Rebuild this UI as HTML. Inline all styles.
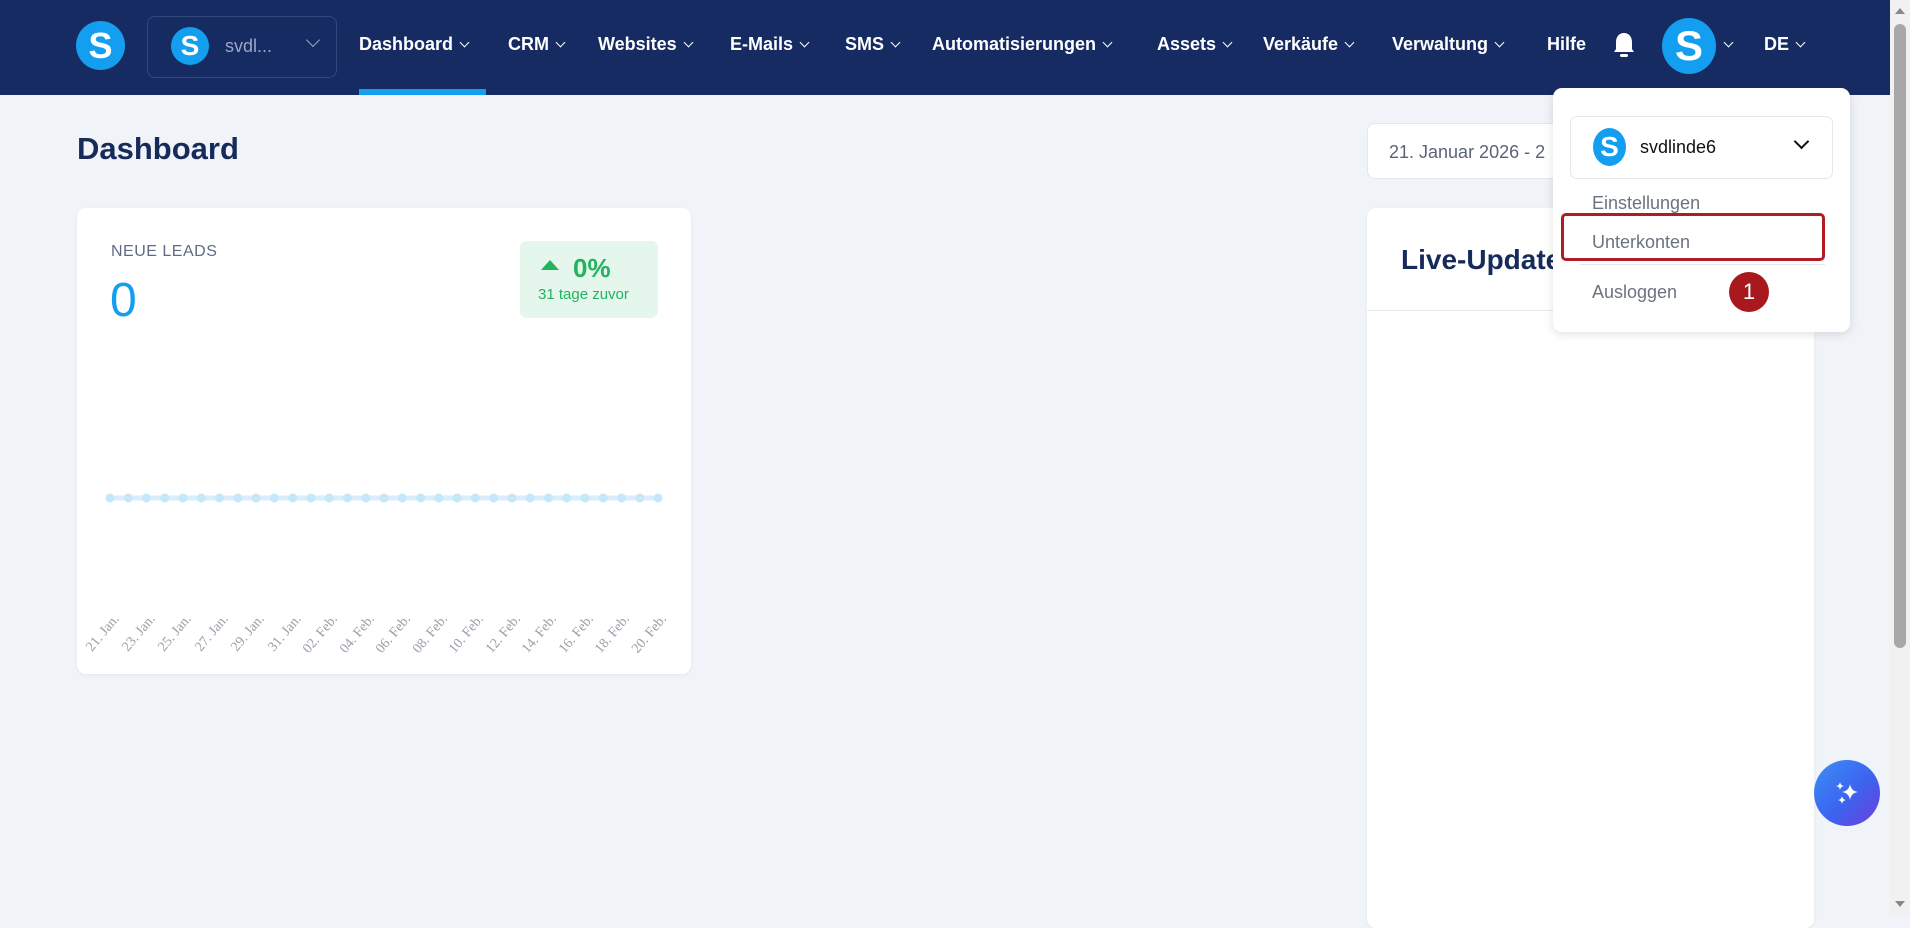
<!DOCTYPE html>
<html><head><meta charset="utf-8"><style>
*{box-sizing:border-box;margin:0;padding:0}
body{width:1910px;height:915px;overflow:hidden;background:#f0f3f8;font-family:"Liberation Sans",sans-serif;position:relative}
.nav{position:absolute;left:0;top:0;width:1890px;height:95px;background:#172b63}
.abs{position:absolute}
.circ{position:absolute;border-radius:50%;background:#139ef0;color:#fff;font-weight:bold;text-align:center;font-family:"Liberation Sans",sans-serif}
.ni{position:absolute;top:34px;color:#fff;font-weight:bold;font-size:18px;white-space:nowrap}
.chev{display:inline-block;width:7px;height:7px;border-right:1.6px solid #fff;border-bottom:1.6px solid #fff;transform:rotate(45deg);margin-left:8px;position:relative;top:-4px}
.card{position:absolute;background:#fff;border-radius:9px;box-shadow:0 1px 3px rgba(0,0,0,.06)}
.lbl{position:absolute;font-family:"Liberation Serif",serif;font-size:14px;color:#9aa0a8;transform:rotate(-50deg);transform-origin:right top;white-space:nowrap}
</style></head><body>
<div class="nav"></div>
<div class="circ" style="left:76px;top:21px;width:49px;height:49px;font-size:36px;line-height:49px">S</div>
<div class="abs" style="left:147px;top:16px;width:190px;height:62px;border:1px solid #34477a;border-radius:8px"></div>
<div class="circ" style="left:171px;top:27px;width:38px;height:38px;font-size:28px;line-height:38px">S</div>
<div class="abs" style="left:225px;top:36px;color:#9aa6c4;font-size:18px">svdl...</div>
<div class="abs" style="left:300px;top:36px"><span class="chev" style="border-color:#9aa6c4;width:10px;height:10px"></span></div>
<div class="ni" style="left:359px">Dashboard<span class="chev"></span></div>
<div class="abs" style="left:359px;top:89px;width:127px;height:6px;background:#139ef0"></div>
<div class="ni" style="left:508px">CRM<span class="chev"></span></div>
<div class="ni" style="left:598px">Websites<span class="chev"></span></div>
<div class="ni" style="left:730px">E-Mails<span class="chev"></span></div>
<div class="ni" style="left:845px">SMS<span class="chev"></span></div>
<div class="ni" style="left:932px">Automatisierungen<span class="chev"></span></div>
<div class="ni" style="left:1157px">Assets<span class="chev"></span></div>
<div class="ni" style="left:1263px">Verkäufe<span class="chev"></span></div>
<div class="ni" style="left:1392px">Verwaltung<span class="chev"></span></div>
<div class="ni" style="left:1547px">Hilfe</div>
<svg class="abs" style="left:1612px;top:31px" width="24" height="28" viewBox="0 0 24 28"><path d="M12 2c-5 0-8 4-8 9v7l-2 3h20l-2-3v-7c0-5-3-9-8-9z" fill="#fff"/><rect x="8" y="23" width="8" height="3" rx="1.5" fill="#fff"/></svg>
<div class="circ" style="left:1662px;top:18px;width:54px;height:56px;font-size:42px;line-height:56px">S</div>
<div class="ni" style="left:1725px"><span class="chev" style="margin-left:0"></span></div>
<div class="ni" style="left:1764px">DE<span class="chev"></span></div>

<div class="abs" style="left:1890px;top:0;width:20px;height:915px;background:#f1f1f1"></div>
<div class="abs" style="left:1894px;top:24px;width:12px;height:624px;background:#a8a8a8;border-radius:6px"></div>
<div class="abs" style="left:1895px;top:8px;border:5px solid transparent;border-bottom:6px solid #888;border-top:0"></div>
<div class="abs" style="left:1895px;top:901px;border:5px solid transparent;border-top:6px solid #888;border-bottom:0"></div>

<div class="abs" style="left:77px;top:131px;font-size:31px;font-weight:bold;color:#172b5a">Dashboard</div>

<div class="card" style="left:77px;top:208px;width:614px;height:466px"></div>
<div class="abs" style="left:111px;top:243px;font-size:16px;color:#5f6b85;letter-spacing:.5px">NEUE LEADS</div>
<div class="abs" style="left:110px;top:273px;font-size:48px;color:#139ef0">0</div>
<div class="abs" style="left:520px;top:241px;width:138px;height:77px;background:#e5f6ec;border-radius:7px"></div>
<div class="abs" style="left:541px;top:260px;border:9px solid transparent;border-bottom:10px solid #22b35e;border-top:0"></div>
<div class="abs" style="left:573px;top:253px;font-size:26px;font-weight:bold;color:#22b35e">0%</div>
<div class="abs" style="left:538px;top:286px;font-size:15px;color:#22b35e">31 tage zuvor</div>
<svg class="abs" style="left:100px;top:488px" width="570" height="20">
<line x1="10" y1="10" x2="558" y2="10" stroke="#d8eefc" stroke-width="5"/>
<g fill="#c6e6fc">
<circle cx="10" cy="10" r="4.5"/><circle cx="28.3" cy="10" r="4.5"/><circle cx="46.5" cy="10" r="4.5"/><circle cx="64.8" cy="10" r="4.5"/><circle cx="83" cy="10" r="4.5"/><circle cx="101.3" cy="10" r="4.5"/><circle cx="119.6" cy="10" r="4.5"/><circle cx="137.9" cy="10" r="4.5"/><circle cx="156.1" cy="10" r="4.5"/><circle cx="174.4" cy="10" r="4.5"/><circle cx="192.7" cy="10" r="4.5"/><circle cx="211" cy="10" r="4.5"/><circle cx="229.2" cy="10" r="4.5"/><circle cx="247.5" cy="10" r="4.5"/><circle cx="265.8" cy="10" r="4.5"/><circle cx="284" cy="10" r="4.5"/><circle cx="302.3" cy="10" r="4.5"/><circle cx="320.6" cy="10" r="4.5"/><circle cx="338.8" cy="10" r="4.5"/><circle cx="357.1" cy="10" r="4.5"/><circle cx="375.4" cy="10" r="4.5"/><circle cx="393.6" cy="10" r="4.5"/><circle cx="411.9" cy="10" r="4.5"/><circle cx="430.2" cy="10" r="4.5"/><circle cx="448.4" cy="10" r="4.5"/><circle cx="466.7" cy="10" r="4.5"/><circle cx="485" cy="10" r="4.5"/><circle cx="503.2" cy="10" r="4.5"/><circle cx="521.5" cy="10" r="4.5"/><circle cx="539.8" cy="10" r="4.5"/><circle cx="558" cy="10" r="4.5"/>
</g></svg>
<div class="lbl" style="left:68px;top:612px">21. Jan.</div>
<div class="lbl" style="left:104px;top:612px">23. Jan.</div>
<div class="lbl" style="left:140px;top:612px">25. Jan.</div>
<div class="lbl" style="left:177px;top:612px">27. Jan.</div>
<div class="lbl" style="left:213px;top:612px">29. Jan.</div>
<div class="lbl" style="left:250px;top:612px">31. Jan.</div>
<div class="lbl" style="left:284px;top:612px">02. Feb.</div>
<div class="lbl" style="left:321px;top:612px">04. Feb.</div>
<div class="lbl" style="left:357px;top:612px">06. Feb.</div>
<div class="lbl" style="left:394px;top:612px">08. Feb.</div>
<div class="lbl" style="left:430px;top:612px">10. Feb.</div>
<div class="lbl" style="left:467px;top:612px">12. Feb.</div>
<div class="lbl" style="left:503px;top:612px">14. Feb.</div>
<div class="lbl" style="left:540px;top:612px">16. Feb.</div>
<div class="lbl" style="left:576px;top:612px">18. Feb.</div>
<div class="lbl" style="left:613px;top:612px">20. Feb.</div>

<div class="abs" style="left:1367px;top:123px;width:260px;height:56px;background:#fff;border:1px solid #e3e7ee;border-radius:8px"></div>
<div class="abs" style="left:1389px;top:142px;font-size:18px;color:#5a6478;white-space:nowrap">21. Januar 2026 - 2</div>

<div class="card" style="left:1367px;top:208px;width:447px;height:720px"></div>
<div class="abs" style="left:1401px;top:244px;font-size:28px;font-weight:bold;color:#172b5a">Live-Updates</div>
<div class="abs" style="left:1367px;top:310px;width:447px;height:1px;background:#e8ebf0"></div>

<div class="abs" style="left:1553px;top:88px;width:297px;height:244px;background:#fff;border-radius:9px;box-shadow:0 2px 10px rgba(0,0,0,.12)"></div>
<div class="abs" style="left:1570px;top:116px;width:263px;height:63px;border:1px solid #e3e7ee;border-radius:7px"></div>
<div class="circ" style="left:1593px;top:128px;width:33px;height:38px;font-size:28px;line-height:38px">S</div>
<div class="abs" style="left:1640px;top:137px;font-size:18px;color:#111">svdlinde6</div>
<div class="abs" style="left:1796px;top:136px;width:11px;height:11px;border-right:2.5px solid #111;border-bottom:2.5px solid #111;transform:rotate(45deg)"></div>
<div class="abs" style="left:1592px;top:193px;font-size:18px;color:#6b7280">Einstellungen</div>
<div class="abs" style="left:1561px;top:213px;width:264px;height:48px;border:3px solid #b01c24;border-radius:5px"></div>
<div class="abs" style="left:1592px;top:232px;font-size:18px;color:#6b7280">Unterkonten</div>
<div class="abs" style="left:1580px;top:264px;width:245px;height:1px;background:#e5e7eb"></div>
<div class="abs" style="left:1592px;top:282px;font-size:18px;color:#6b7280">Ausloggen</div>
<div class="abs" style="left:1729px;top:272px;width:40px;height:40px;border-radius:50%;background:#a8191e;color:#fff;font-size:22px;text-align:center;line-height:40px">1</div>

<div class="abs" style="left:1814px;top:760px;width:66px;height:66px;border-radius:50%;background:linear-gradient(135deg,#3b8ff5,#3d63f0 55%,#6a3fd9)"></div>
<svg class="abs" style="left:1830px;top:776px" width="34" height="34" viewBox="0 0 34 34"><path d="M20 8 Q21 15 28 16 Q21 17 20 24 Q19 17 12 16 Q19 15 20 8Z" fill="#fff"/><path d="M10 6 Q10.5 9.5 14 10 Q10.5 10.5 10 14 Q9.5 10.5 6 10 Q9.5 9.5 10 6Z" fill="#fff"/><path d="M12 20 Q12.5 23.5 16 24 Q12.5 24.5 12 28 Q11.5 24.5 8 24 Q11.5 23.5 12 20Z" fill="#fff"/></svg>
</body></html>
